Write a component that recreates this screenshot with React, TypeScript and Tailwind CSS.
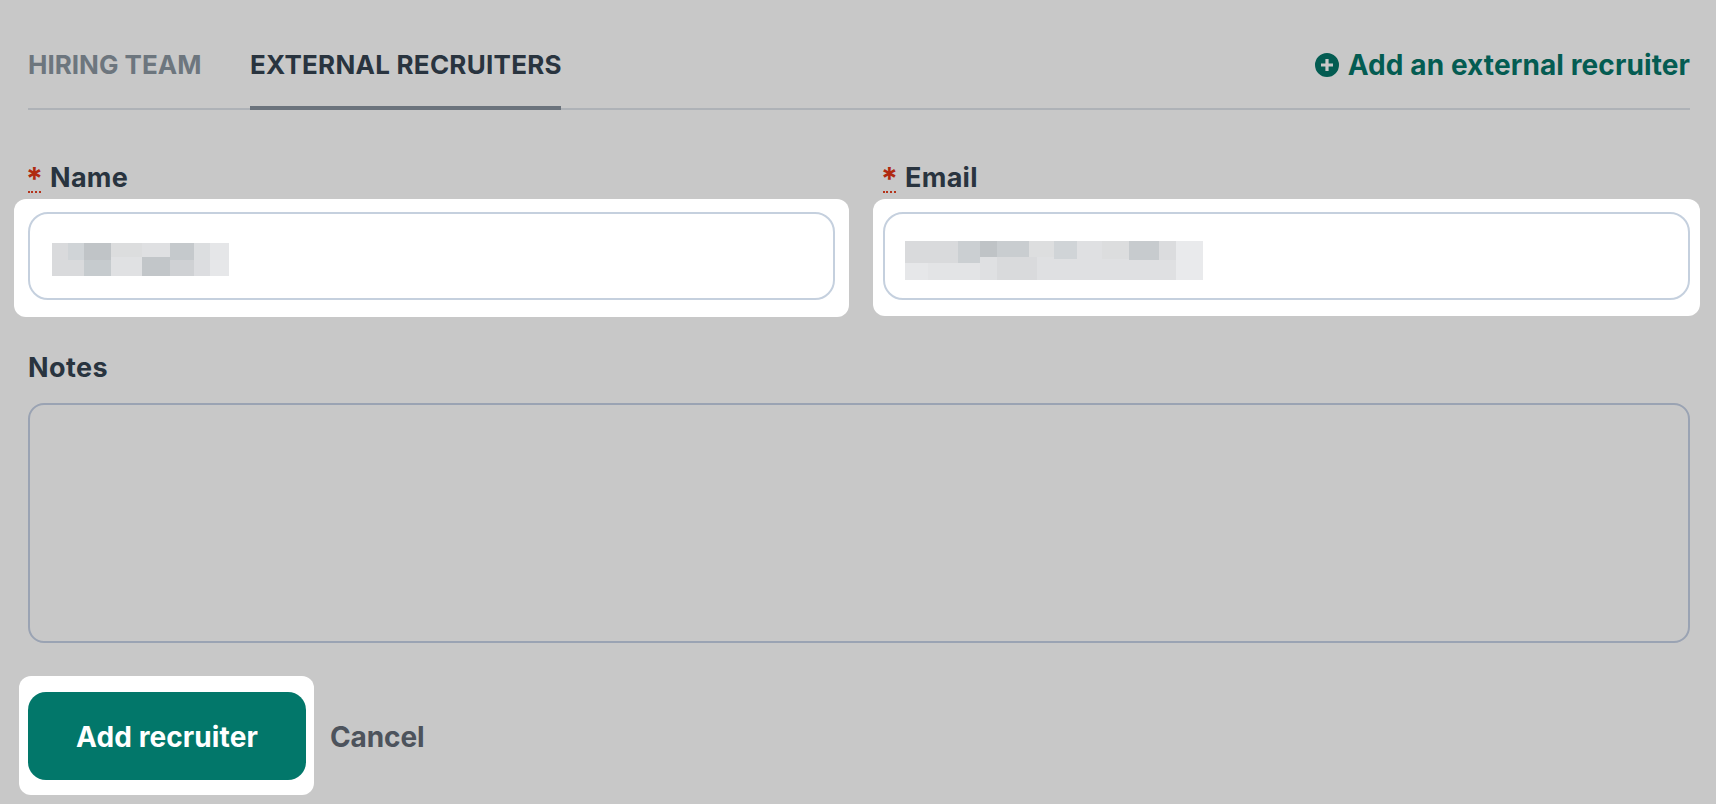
const font = "font-['Inter',sans-serif]";

/* Pixelated stand-ins for the redacted values: [width class, top height class, top colour, bottom colour] */
const nameBlur = [
  ["w-[16px]", "h-[14px]", "bg-[#d9dadc]", "bg-[#d9dadc]"],
  ["w-[16px]", "h-[17px]", "bg-[#d0d4d7]", "bg-[#d9dadc]"],
  ["w-[27px]", "h-[17px]", "bg-[#c0c4c7]", "bg-[#c6cbce]"],
  ["w-[31px]", "h-[14px]", "bg-[#dcddde]", "bg-[#e0e1e3]"],
  ["w-[28px]", "h-[14px]", "bg-[#dfe0e2]", "bg-[#c2c6c9]"],
  ["w-[24px]", "h-[17px]", "bg-[#c5c9cc]", "bg-[#cfd1d4]"],
  ["w-[16px]", "h-[17px]", "bg-[#dcdee0]", "bg-[#dcdde0]"],
  ["w-[19px]", "h-[17px]", "bg-[#e5e6e8]", "bg-[#e6e7e9]"],
];

const emailBlur = [
  ["w-[23px]", "h-[22px]", "bg-[#d9dadc]", "bg-[#e6e7e9]"],
  ["w-[30px]", "h-[22px]", "bg-[#d9dadc]", "bg-[#e3e4e6]"],
  ["w-[22px]", "h-[22px]", "bg-[#cbcfd2]", "bg-[#e3e4e6]"],
  ["w-[17px]", "h-[16px]", "bg-[#bfc3c6]", "bg-[#dfe0e2]"],
  ["w-[32px]", "h-[16px]", "bg-[#c9cdd0]", "bg-[#d9dadc]"],
  ["w-[8px]", "h-[16px]", "bg-[#dddedf]", "bg-[#d9dadc]"],
  ["w-[17px]", "h-[16px]", "bg-[#dddedf]", "bg-[#dfe0e2]"],
  ["w-[23px]", "h-[18px]", "bg-[#d0d4d7]", "bg-[#dfe0e2]"],
  ["w-[25px]", "h-[18px]", "bg-[#dfe0e2]", "bg-[#dfe0e2]"],
  ["w-[27px]", "h-[18px]", "bg-[#dcddde]", "bg-[#dfe0e2]"],
  ["w-[30px]", "h-[19px]", "bg-[#c7cbce]", "bg-[#dfe0e2]"],
  ["w-[17px]", "h-[19px]", "bg-[#dbdcde]", "bg-[#dfe0e2]"],
  ["w-[27px]", "h-[19px]", "bg-[#e9eaec]", "bg-[#e9eaec]"],
];

function Blur({ cols, className }: { cols: string[][]; className: string }) {
  return (
    <div className={`flex ${className}`}>
      {cols.map(([w, h, top, bottom], i) => (
        <div key={i} className={`flex flex-col ${w}`}>
          <div className={`${h} ${top}`} />
          <div className={`flex-1 ${bottom}`} />
        </div>
      ))}
    </div>
  );
}

function PlusCircle() {
  return (
    <svg width="24" height="24" viewBox="0 0 24 24" aria-hidden>
      <path
        fillRule="evenodd"
        d="M12 0a12 12 0 1 0 0 24a12 12 0 0 0 0-24zM10.4 6h3.2v4.4H18v3.2h-4.4V18h-3.2v-4.4H6v-3.2h4.4z"
        fill="#045c52"
      />
    </svg>
  );
}

function RequiredLabel({ children }: { children: string }) {
  return (
    <div className="mb-[7px] flex h-[30px] items-start">
      <span className="mr-[9px] flex h-[31px] w-[13px] flex-col items-center border-b-2 border-dotted border-[#b5331b] text-[31px] leading-[33px] font-bold text-[#b02a10]">
        *
      </span>
      <span className="pt-[1px] text-[27px] leading-[30px] font-[650] tracking-[0.3px] text-[#29343f]">
        {children}
      </span>
    </div>
  );
}

export default function App() {
  return (
    <div className={`${font} h-[804px] overflow-hidden bg-[#c8c8c8] pr-[26px] pl-[28px]`}>
      {/* Tabs */}
      <div className="flex items-start justify-between border-b-2 border-[#aeb2b7] pt-[50px]">
        <div className="-mb-[2px] flex gap-[48px]">
          <div className="h-[60px] w-[174px] text-[26px] leading-[30px] font-[650] text-[#6d767e]">
            HIRING TEAM
          </div>
          <div className="h-[60px] w-[311px] border-b-4 border-[#6b737c] text-[26px] leading-[30px] font-[650] tracking-[0.25px] whitespace-nowrap text-[#29343f]">
            EXTERNAL RECRUITERS
          </div>
        </div>
        <div className="flex items-center gap-[9px] text-[28px] leading-[30px] font-[650] tracking-[0.1px] text-[#045c52]">
          <PlusCircle />
          Add an external recruiter
        </div>
      </div>

      {/* Name + email */}
      <div className="mt-[52px] grid grid-cols-2 gap-[48px]">
        <div>
          <RequiredLabel>Name</RequiredLabel>
          <div className="-mx-[14px] rounded-[12px] bg-white px-[14px] pt-[13px] pb-[17px]">
            <div className="flex h-[88px] items-center rounded-[20px] border-2 border-[#c5d0de] pl-[22px]">
              <Blur cols={nameBlur} className="mt-[7px] h-[33px]" />
            </div>
          </div>
        </div>
        <div>
          <RequiredLabel>Email</RequiredLabel>
          <div className="-mx-[10px] rounded-[12px] bg-white px-[10px] pt-[13px] pb-[16px]">
            <div className="flex h-[88px] items-center rounded-[20px] border-2 border-[#c5d0de] pl-[20px]">
              <Blur cols={emailBlur} className="mt-[9px] h-[39px]" />
            </div>
          </div>
        </div>
      </div>

      {/* Notes */}
      <div className="mt-[36px] mb-[20px] h-[30px] text-[27px] leading-[30px] font-[650] tracking-[0.4px] text-[#29343f]">
        Notes
      </div>
      <textarea className="block h-[240px] w-full resize-none rounded-[16px] border-2 border-[#9aa3b3] bg-transparent" />

      {/* Actions */}
      <div className="mt-[33px] flex items-center">
        <div className="-ml-[9px] rounded-[12px] bg-white pt-[16px] pr-[8px] pb-[15px] pl-[9px]">
          <button className="flex h-[88px] w-[278px] items-center justify-center rounded-[18px] bg-[#02776a] pt-[2px] text-[28px] font-[650] tracking-[0.1px] text-white">
            Add recruiter
          </button>
        </div>
        <button className="mt-[2px] ml-[16px] text-[28px] font-[650] tracking-[-0.1px] text-[#4d535c]">Cancel</button>
      </div>
    </div>
  );
}
